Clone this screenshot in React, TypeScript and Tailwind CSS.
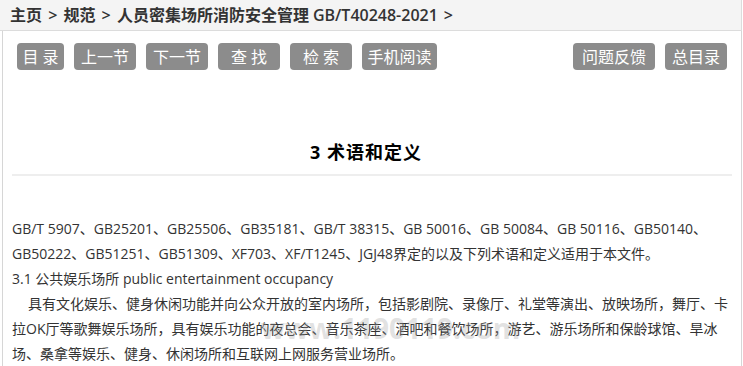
const navLeft = [
  { label: '目 录', w: 'w-[47px]' },
  { label: '上一节', w: 'w-[62px]' },
  { label: '下一节', w: 'w-[62px]' },
  { label: '查 找', w: 'w-[62px]' },
  { label: '检 索', w: 'w-[62px]' },
  { label: '手机阅读', w: 'w-[75px]' },
];

const navRight = [
  { label: '问题反馈', w: 'w-[82px]' },
  { label: '总目录', w: 'w-[62px]' },
];

function NavButton({ label, w }: { label: string; w: string }) {
  return (
    <a
      href="#"
      className={`${w} h-[27px] flex items-center justify-center rounded-[4px] bg-[#8c8c8c] text-white text-[16px] whitespace-pre`}
    >
      {label}
    </a>
  );
}

export default function App() {
  return (
    <div
      className="w-[743px] h-[366px] overflow-hidden bg-white text-[#333]"
      style={{ fontFamily: '"Open Sans", "Noto Sans CJK SC", sans-serif' }}
    >
      <div className="h-[31px] bg-[#f4f4f4] border-b border-[#dcdcdc] border-r border-r-[#dcdcdc] w-[742px] flex items-center pl-[10px] text-[16px] font-semibold">
        <span className="[word-spacing:2px]">主页 &gt; 规范 &gt; 人员密集场所消防安全管理</span>
        <span className="ml-[4px]">GB/T40248-2021</span>
        <span className="ml-[6px]">&gt;</span>
      </div>

      <div className="relative h-[335px] border-l border-r border-[#d6d6d6] ml-[2px] w-[740px]">
        <div className="flex justify-between pl-[14px] pr-[14px] pt-[12px]">
          <div className="flex gap-[10px]">
            {navLeft.map((b) => (
              <NavButton key={b.label} {...b} />
            ))}
          </div>
          <div className="flex gap-[10px]">
            {navRight.map((b) => (
              <NavButton key={b.label} {...b} />
            ))}
          </div>
        </div>

        <div className="mx-[9px] mt-[69px] pb-[8px] pr-[12px] border-b-2 border-[#eeeeee] text-center">
          <h1 className="text-[18px] font-bold text-black tracking-[1px]">3 术语和定义</h1>
        </div>

        <div className="px-[9px] pt-[40px] text-[14px] leading-[25px]">
          <p>
            GB/T 5907、GB25201、GB25506、GB35181、GB/T 38315、GB 50016、GB 50084、GB 50116、GB50140、GB50222、GB51251、GB51309、XF703、XF/T1245、JGJ48界定的以及下列术语和定义适用于本文件。
          </p>
          <p>3.1 公共娱乐场所 public entertainment occupancy</p>
          <p className="indent-[16px]">
            具有文化娱乐、健身休闲功能并向公众开放的室内场所，包括影剧院、录像厅、礼堂等演出、放映场所，舞厅、卡拉OK厅等歌舞娱乐场所，具有娱乐功能的夜总会、音乐茶座、酒吧和餐饮场所，游艺、游乐场所和保龄球馆、旱冰场、桑拿等娱乐、健身、休闲场所和互联网上网服务营业场所。
          </p>
        </div>

        <div className="absolute left-[258px] top-[276px] text-[28px] font-bold text-[#a0a0a0] opacity-30 pointer-events-none">
          www.1190119.com
        </div>
      </div>
    </div>
  );
}
